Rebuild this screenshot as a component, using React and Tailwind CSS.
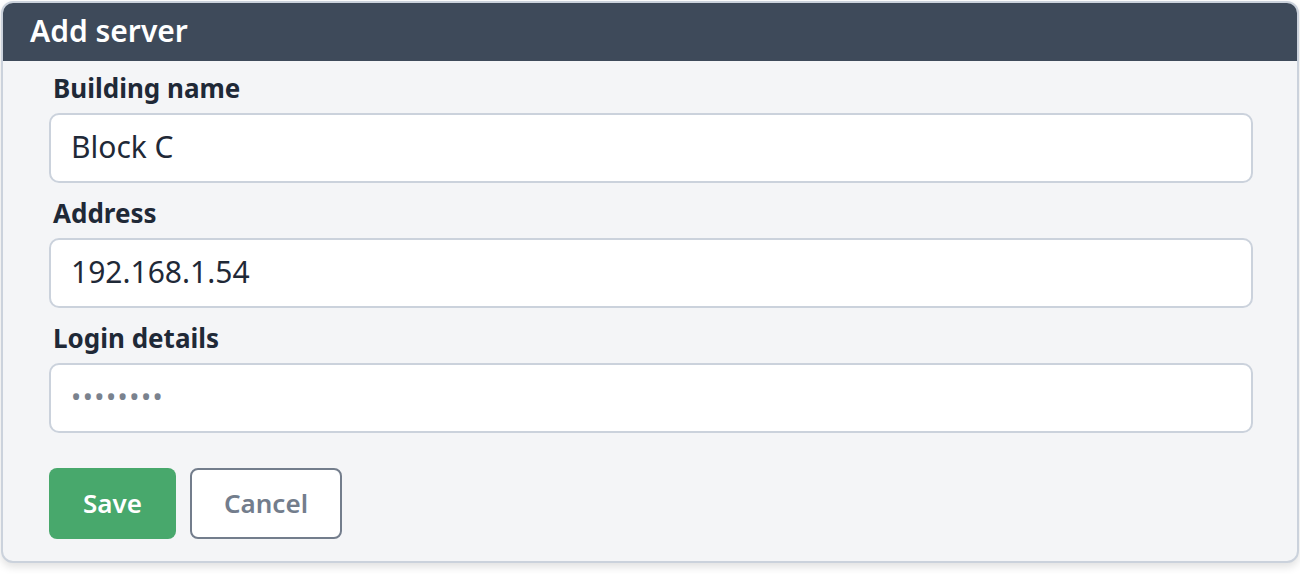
import React from 'react';

const fields = [
  { label: 'Building name', value: 'Block C' },
  { label: 'Address', value: '192.168.1.54' },
  { label: 'Login details', value: '••••••••', secret: true },
];

const App = () => {
  return (
    <div className="min-h-screen bg-white pt-px px-px" style={{ fontFamily: '"Noto Sans", "Open Sans", sans-serif' }}>
      <div className="rounded-[12px] border-2 border-[#cbd2dc] bg-[#f4f5f7] overflow-hidden shadow-[0_4px_8px_rgba(0,0,0,0.12)]">
        {/* Header */}
        <div className="h-[58px] bg-[#3e4a5a] pl-[27px] flex items-center">
          <h2 className="text-[30px] font-semibold text-white leading-none -mt-[2px]">Add server</h2>
        </div>

        {/* Form */}
        <div className="pl-[46px] pr-[44px] pt-[9px] pb-[22px]">
          {fields.map((field, i) => (
            <div key={field.label} className={i > 0 ? 'mt-[12px]' : ''}>
              <label className="block pl-[4px] text-[26px] leading-[36px] font-bold text-[#1f2937]">
                {field.label}
              </label>
              <div className="mt-[7px] h-[70px] rounded-[10px] border-2 border-[#cbd2dc] bg-white flex items-center px-[20px]">
                {field.secret ? (
                  <span className="text-[27px] tracking-[1.5px] text-[#7a828e] -mt-[2px]">{field.value}</span>
                ) : (
                  <span className="text-[30px] text-[#1f2937] -mt-[3px]">{field.value}</span>
                )}
              </div>
            </div>
          ))}

          {/* Actions */}
          <div className="mt-[35px] flex gap-[14px]">
            <button className="h-[71px] w-[127px] rounded-[8px] bg-[#48a86c] text-[26px] font-semibold text-white">
              Save
            </button>
            <button className="h-[71px] w-[152px] rounded-[8px] border-2 border-[#737d8c] bg-white text-[26px] font-semibold text-[#737d8c]">
              Cancel
            </button>
          </div>
        </div>
      </div>
    </div>
  );
};

export default App;
